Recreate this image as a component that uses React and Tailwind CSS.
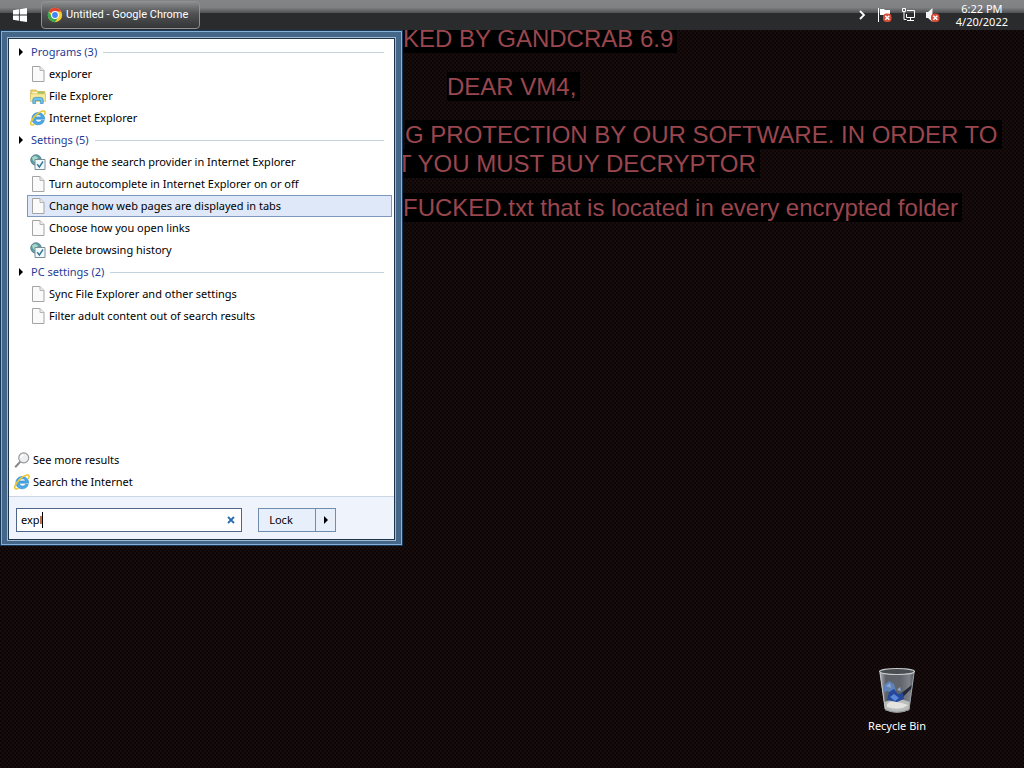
const Page = () => (
  <svg className="size-4 shrink-0" viewBox="0 0 16 16">
    <path d="M2.500.5h7.500l4 4v11H2.500z" fill="#fafafa" stroke="#a4a4a4" />
    <path d="M10 .5v4h4" fill="#ececec" stroke="#b4b4b4" />
  </svg>
);

const Folder = () => (
  <svg className="size-4 shrink-0" viewBox="0 0 16 16">
    <path d="M.8 2h5.400l1.300 1.500h7.300V9H.8z" fill="#ecd57a" stroke="#c9a93f" strokeWidth=".7" />
    <path d="M8 3.800h6v2H8z" fill="#8ccb62" />
    <path d="M2.500 4.200H7V6H2.500z" fill="#fdf8d8" />
    <path d="M.5 5.800h15v7.600H.5z" fill="#f8e998" stroke="#d2b755" strokeWidth=".6" />
    <path d="M2.800 15.500V12q0-2.600 2.600-2.600h5.200q2.600 0 2.600 2.600v3.500h-2.800v-3H5.600v3z" fill="#6cc3ec" stroke="#3c8dbf" strokeWidth=".7" />
  </svg>
);

const Ie = () => (
  <svg className="size-4 shrink-0" viewBox="0 0 16 16">
    <path d="M14.700 9.200H5.300c.3 3.200 4.700 3.700 5.900 1.300h3.100C12.300 16.800 1.900 16.300 1.900 8.600c0-8 12.800-8.300 12.800.6zM5.400 6.900h5.900C11 4.100 5.900 4.100 5.400 6.900z" fill="#4aaae8" stroke="#1d74b8" strokeWidth=".5" />
    <path d="M14.300 4.900C15.700 2.300 15.200.6 12.800 1 8.500 1.800 2 8 .9 12.300c-.7 2.900 1.200 3.300 3.600 2" fill="none" stroke="#ecc732" strokeWidth="1.600" />
  </svg>
);

const Settings = () => (
  <svg className="size-4 shrink-0" viewBox="0 0 16 16">
    <circle cx="6" cy="6" r="5.300" fill="#5b9da6" stroke="#56788a" strokeWidth=".8" />
    <path d="M2 3.500q3-3 6 0-2 2.500-1 5Q3 9 2 3.500z" fill="#a9d8c9" />
    <path d="M5 5.500h10v10H5z" fill="#f2f9fc" stroke="#7c8d95" />
    <path d="m7.200 10.200 2.200 2.800L13 7.500" fill="none" stroke="#33789a" strokeWidth="1.400" />
  </svg>
);

const Magnifier = () => (
  <svg className="size-4 shrink-0" viewBox="0 0 16 16">
    <path d="m6.200 9.800-5 5.400" stroke="#8a8a8a" strokeWidth="2" />
    <circle cx="9.700" cy="5.900" r="5" fill="#eceeef" stroke="#949697" strokeWidth="1.100" />
    <path d="M6.700 6q.3-2.700 3-3" fill="none" stroke="#fff" strokeWidth="1.300" />
  </svg>
);

const Chrome = () => (
  <svg className="size-4 shrink-0" viewBox="0 0 16 16">
    <circle cx="8" cy="8" r="7.200" fill="#f8cb2e" />
    <path d="M8 8 1.760 4.400A7.200 7.200 0 0 1 14.240 4.400H8z" fill="#e24434" />
    <path d="M1.760 4.400A7.200 7.200 0 0 0 8 15.200l3.250-5.300L8 8 4.750 9.880z" fill="#38a852" />
    <circle cx="8" cy="8" r="3.900" fill="#fff" />
    <circle cx="8" cy="8" r="2.900" fill="#4285f4" />
  </svg>
);

const Badge = () => (
  <>
    <rect x="7" y="6.500" width="8.500" height="8.500" rx="3.500" fill="#d94b3a" />
    <path d="m9.300 8.800 4 4m0-4-4 4" stroke="#fff" strokeWidth="1.500" />
  </>
);

const Arrow = () => (
  <svg className="h-2 w-1 shrink-0" viewBox="0 0 4 8"><path d="M0 0v8l4-4z" fill="#000" /></svg>
);

const RecycleBin = () => (
  <svg className="h-12 w-10" viewBox="0 0 40 48">
    <defs>
      <linearGradient id="glass" x2="1">
        <stop stopColor="#b6bbc0" />
        <stop offset=".18" stopColor="#5d6268" />
        <stop offset=".6" stopColor="#62666c" />
        <stop offset=".85" stopColor="#7d8288" />
        <stop offset="1" stopColor="#4c5056" />
      </linearGradient>
    </defs>
    <path d="M2.500 5h35l-5.200 39q-12 5-24.300 0z" fill="url(#glass)" />
    <path d="M7.500 36q12-6 25.500 0l-.8 8q-12 5-24 0z" fill="#b9bcba" />
    <path d="M10 38q4-4 9-2l6 1 6 2-5 3q-8 2-16-1z" fill="#e3e4e0" />
    <path d="M36 18 22 29l4 2 9-9z" fill="#252a38" />
    <path d="m7 19 5-4 5 3 2 7-5 4-3-4-4 1z" fill="#5f82b8" />
    <path d="m12 26 5-3 4 5 5-1 1 6-7 3-10-2z" fill="#24489c" />
    <path d="m13 31 4-3 5 4-4 3z" fill="#5c88d8" />
    <path d="m9 20 4-3 1 5zm11 4 3-3 1 4z" fill="#8ba8d0" />
    <ellipse cx="20" cy="5.500" rx="17.500" ry="3" fill="#4a4d51" stroke="#c5c9cc" strokeWidth="1.200" />
    <path d="m3 7 5.200 36" fill="none" stroke="#c4c7ca" />
    <path d="m37 7-5 36" fill="none" stroke="#9ca1a6" />
    <path d="M8 43.500q12 5.500 24 0" fill="none" stroke="#8d9297" />
  </svg>
);

const groups = [
  { title: "Programs (3)", items: [["explorer", Page], ["File Explorer", Folder], ["Internet Explorer", Ie]] },
  {
    title: "Settings (5)",
    items: [
      ["Change the search provider in Internet Explorer", Settings],
      ["Turn autocomplete in Internet Explorer on or off", Page],
      ["Change how web pages are displayed in tabs", Page, true],
      ["Choose how you open links", Page],
      ["Delete browsing history", Settings],
    ],
  },
  { title: "PC settings (2)", items: [["Sync File Explorer and other settings", Page], ["Filter adult content out of search results", Page]] },
];

function SearchBox() {
  return (
    <form className="flex h-6 w-[226px] items-center border border-[#4d6685] bg-white pr-1" onSubmit={(e) => e.preventDefault()}>
      <div className="flex min-w-0 flex-1 items-center">
        <input aria-label="Search" defaultValue="expl" className="field-sizing-content min-w-0 bg-transparent pl-1 outline-none" />
        <span className="h-4 w-px bg-black" />
      </div>
      <button type="button" aria-label="Clear search" className="flex size-3 items-center justify-center">
        <svg className="size-2" viewBox="0 0 8 8"><path d="m1 1 6 6m0-6-6 6" stroke="#2a6cb0" strokeWidth="1.800" /></svg>
      </button>
    </form>
  );
}

function Taskbar() {
  return (
    <header className="bg-linear-to-b from-[#848587] via-[#808183] via-25% to-[#505153] to-43% text-white">
      <div className="flex h-[30px] items-center bg-linear-to-b from-transparent from-43% to-[#292b2d] to-43%">
        <button aria-label="Start" className="flex w-10 justify-center">
          <svg className="h-3.5 w-3.5" viewBox="0 0 13 13" fill="#fff"><path d="M0 2 5.500 1.200V6H0zM6.300 1.100 13 0v6H6.300zM0 6.900h5.500v4.900L0 11zM6.300 6.900H13V13l-6.700-1z" /></svg>
        </button>
        <button className="ml-px flex h-7 w-[159px] items-center gap-[3px] rounded-sm border border-[#8f9092] bg-linear-to-b from-[#8c8d8f] via-[#505153] via-45% to-[#343638] px-[5px]">
          <Chrome /><span className="font-[Roboto,sans-serif] whitespace-nowrap">Untitled - Google Chrome</span>
        </button>
        <div className="ml-auto flex h-full items-center pr-4">
          <button aria-label="Show hidden icons" className="mr-2">
            <svg className="size-3" viewBox="0 0 12 12"><path d="m4 2 4 4-4 4" fill="none" stroke="#fff" strokeWidth="1.800" /></svg>
          </button>
          <button aria-label="Action Center" className="mr-2">
            <svg className="size-4" viewBox="0 0 16 16"><path d="M2.500 1v14" stroke="#fff" /><path d="M4 2h4l1 1h5v6H9L8 8H4z" fill="#fff" /><Badge /></svg>
          </button>
          <button aria-label="Network" className="mr-2">
            <svg className="size-4" viewBox="0 0 16 16" fill="none" stroke="#fff"><path d="M7 3.500h7.500v7h-8V7M10.500 11v2.500M7 13.500h7M2.500 1.500h3v3h-3zM4 5v7.500h2.500" /></svg>
          </button>
          <button aria-label="Volume" className="mr-4">
            <svg className="size-4" viewBox="0 0 16 16"><path d="M2 5h2l4.500-4v14L4 11H2z" fill="#f4f4f4" /><Badge /></svg>
          </button>
          <div className="text-center leading-[13px]"><div>6:22 PM</div><div>4/20/2022</div></div>
        </div>
      </div>
    </header>
  );
}

function StartMenu() {
  return (
    <section aria-label="Start menu" className="w-[403px] shrink-0 border border-[#17395a] bg-[#446688] text-black">
      <div className="border border-[#88b0d4] px-[5px] pt-[5px] pb-[3px]">
        <div className="border border-[#a0bad0]">
          <div className="border border-[#1d344c] bg-white">
            <div className="flex h-[457px] flex-col pt-0.5">
              {groups.map((g) => (
                <div key={g.title}>
                  <h2 className="flex h-[22px] items-center px-[10px] text-[#1e3c96]">
                    <Arrow /><span className="mr-1.5 ml-2">{g.title}</span><span className="h-px flex-1 bg-[#c4d2e0]" />
                  </h2>
                  <ul>
                    {g.items.map(([name, Icon, active]) => (
                      <li key={name} className="pr-[2px] pl-[18px]">
                        <button className={active ? "flex h-[22px] w-full items-center gap-[3px] border border-[#7d98ba] bg-[#dfe8f8] pl-[2px]" : "flex h-[22px] w-full items-center gap-[3px] border border-transparent pl-[2px]"}>
                          <Icon />{name}
                        </button>
                      </li>
                    ))}
                  </ul>
                </div>
              ))}
              <div className="mt-auto pb-[3px] pl-[5px]">
                <button className="flex h-[22px] items-center gap-[3px]"><Magnifier />See more results</button>
                <button className="flex h-[22px] items-center gap-[3px]"><Ie />Search the Internet</button>
              </div>
            </div>
            <div className="flex h-[43px] items-center gap-4 border-t border-[#c9d5e2] bg-[#eff4fc] pt-[3px] pl-[7px]">
              <SearchBox />
              <div className="flex h-6 w-[78px] border border-[#6f8dae] bg-[#e7effb]">
                <button className="flex-1 pr-3">Lock</button>
                <button aria-label="Power options" className="flex w-5 items-center justify-center border-l border-[#6f8dae]"><Arrow /></button>
              </div>
            </div>
          </div>
        </div>
      </div>
    </section>
  );
}

function Line({ children }) {
  return <span className="inline-block bg-black pr-1">{children}</span>;
}

export default function App() {
  return (
    <div className="relative flex min-h-screen flex-col overflow-hidden bg-[#110808] bg-[repeating-conic-gradient(#180c0c_0_25%,#0c0606_0_50%)] bg-size-[4px_4px] font-['Noto_Sans','Open_Sans',sans-serif] text-[11px] leading-4">
      <Taskbar />
      <main className="flex items-start">
        <StartMenu />
        <div className="flex min-w-0 flex-1 flex-col overflow-hidden font-['Liberation_Sans',Arial,sans-serif] text-2xl leading-[29px] whitespace-nowrap text-[#9a464e]">
          <p className="-mt-1.5 mb-[19px]"><Line>KED BY GANDCRAB 6.9</Line></p>
          <p className="mb-[19px] pl-11"><Line>DEAR VM4,</Line></p>
          <p className="pl-0.5"><Line>G PROTECTION BY OUR SOFTWARE. IN ORDER TO</Line></p>
          <p className="mb-[15px] -ml-1.5"><Line>T YOU MUST BUY DECRYPTOR</Line></p>
          <p><Line>FUCKED.txt that is located in every encrypted folder</Line></p>
        </div>
      </main>
      <button className="absolute right-[90px] bottom-[34px] flex w-[74px] flex-col items-center gap-1 text-white">
        <RecycleBin />
        Recycle Bin
      </button>
    </div>
  );
}
